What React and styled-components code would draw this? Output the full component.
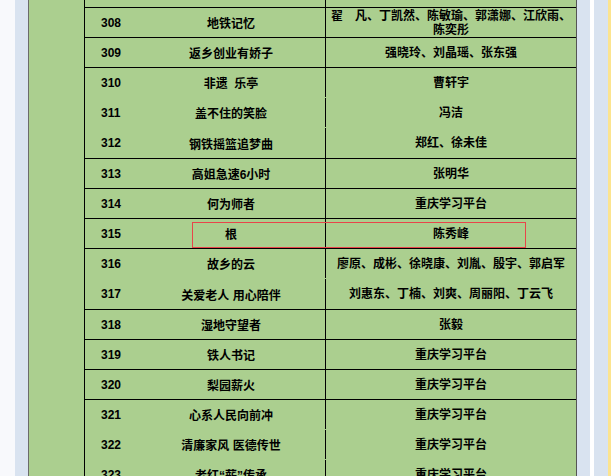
import React from "react";
import styled, { createGlobalStyle } from "styled-components";

const rows = [
  { no: "307", title: "", names: [""], line: false },
  { no: "308", title: "地铁记忆", names: ["翟　凡、丁凯然、陈敏瑜、郭潇娜、江欣雨、", "陈奕彤"], line: true },
  { no: "309", title: "返乡创业有娇子", names: ["强晓玲、刘晶瑶、张东强"], line: true },
  { no: "310", title: "非遗  乐亭", names: ["曹轩宇"], line: true },
  { no: "311", title: "盖不住的笑脸", names: ["冯洁"], line: false },
  { no: "312", title: "钢铁摇篮追梦曲", names: ["郑红、徐未佳"], line: false, tall: true },
  { no: "313", title: "高姐急速6小时", names: ["张明华"], line: true },
  { no: "314", title: "何为师者", names: ["重庆学习平台"], line: true },
  { no: "315", title: "根", names: ["陈秀峰"], line: true },
  { no: "316", title: "故乡的云", names: ["廖原、成彬、徐晓康、刘胤、殷宇、郭启军"], line: true },
  { no: "317", title: "关爱老人 用心陪伴", names: ["刘惠东、丁楠、刘爽、周丽阳、丁云飞"], line: false, tall: true },
  { no: "318", title: "湿地守望者", names: ["张毅"], line: true },
  { no: "319", title: "铁人书记", names: ["重庆学习平台"], line: true },
  { no: "320", title: "梨园薪火", names: ["重庆学习平台"], line: true },
  { no: "321", title: "心系人民向前冲", names: ["重庆学习平台"], line: true },
  { no: "322", title: "清廉家风 医德传世", names: ["重庆学习平台"], line: false },
  { no: "323", title: "老红“薪”传承", names: ["重庆学习平台"], line: false },
];

const GlobalStyle = createGlobalStyle`
  html, body {
    margin: 0;
    height: 476px;
    overflow: hidden;
    background: #f8f9fc;
  }
`;

const Screen = styled.div`
  position: relative;
  display: flex;
  height: 476px;
  overflow: hidden;
  font-family: "Liberation Sans", "Noto Sans CJK SC", sans-serif;
  font-size: 12px;
  font-weight: bold;
  color: #000;
`;

const Strip = styled.div`
  flex: 0 0 ${(p) => p.w}px;
  background: ${(p) => p.bg};
`;

const Page = styled.div`
  flex: 0 0 548px;
  box-sizing: border-box;
  border-left: 1px solid #6b6b6b;
  border-right: 1px solid #555;
  background: #abcf8f;
  padding-left: 55px;
`;

const Table = styled.div`
  border-left: 1px solid #000;
  margin-top: -23px;
  min-height: 520px;
`;

const Row = styled.div`
  display: grid;
  grid-template-columns: 52px 188px 251px;
  box-sizing: border-box;
  height: ${(p) => (p.tall ? 31 : 30)}px;
  border-top: 1px solid ${(p) => (p.line ? "#000" : "transparent")};
`;

const NoCell = styled.div`
  display: flex;
  align-items: center;
  padding-left: 16px;
`;

const TitleCell = styled.div`
  display: flex;
  align-items: center;
  justify-content: center;
  white-space: pre;
`;

const NameCell = styled.div`
  display: flex;
  flex-direction: column;
  align-items: center;
  justify-content: center;
  border-left: 1px solid #000;
  line-height: 14px;
  white-space: pre;
`;

const Highlight = styled.div`
  position: absolute;
  left: 192px;
  top: 222px;
  width: 334px;
  height: 26px;
  box-sizing: border-box;
  border: 1px solid #e8454a;
  pointer-events: none;
`;

export default function App() {
  return (
    <>
      <GlobalStyle />
      <Screen>
        <Strip w={15} bg="#f8f9fc" />
        <Strip w={13} bg="#d9e3f0" />
        <Page>
          <Table>
            {rows.map((r) => (
              <Row key={r.no} line={r.line} tall={r.tall}>
                <NoCell>{r.no === "307" ? "" : r.no}</NoCell>
                <TitleCell>{r.title}</TitleCell>
                <NameCell>
                  {r.names.map((n, i) => (
                    <span key={i}>{n}</span>
                  ))}
                </NameCell>
              </Row>
            ))}
          </Table>
        </Page>
        <Strip w={13} bg="#d9e3f0" />
        <Strip w={4} bg="#ffffff" />
        <Strip w={14} bg="#d9e3f0" />
        <Strip w={3} bg="#fce48f" />
        <Highlight />
      </Screen>
    </>
  );
}
